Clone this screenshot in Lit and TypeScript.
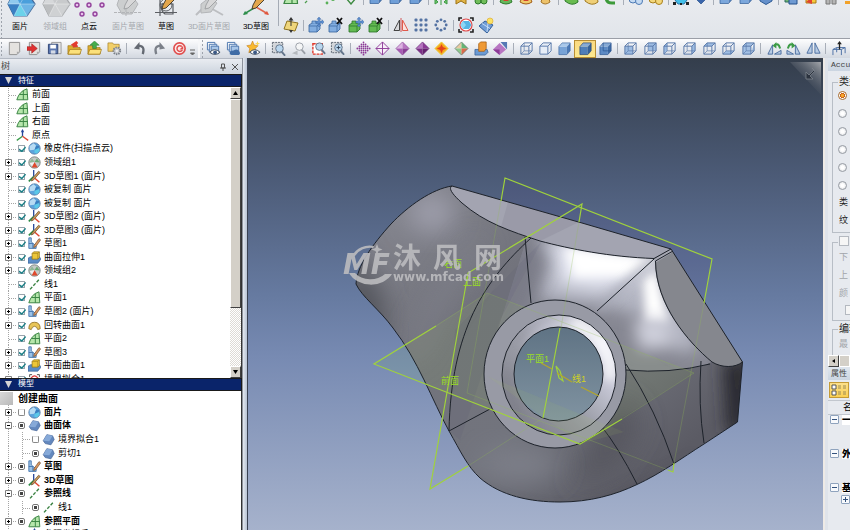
import { LitElement, html, css, svg, nothing, TemplateResult, SVGTemplateResult } from "lit";
import { customElement } from "lit/decorators.js";
import { classMap } from "lit/directives/class-map.js";

type Art = SVGTemplateResult;

/* ---------- shared icon parts, all on a 16 x 16 grid ---------- */
const icon = (art: Art, cls = "ic"): TemplateResult =>
  html`<svg class=${cls} viewBox="0 0 16 16" aria-hidden="true">${art}</svg>`;

const wireCube = (face = "none", edge = "#5878a9", inner = true): Art => svg`
  <path d="M2 5.5h8.5v8.5H2zM2 5.5L5.5 2H14l-3.500 3.500M14 2v8.500l-3.500 3.500" fill=${face} stroke=${edge} stroke-linejoin="round"/>
  ${inner ? svg`<path d="M5.500 2v8.500H14M5.500 10.500L2 14" fill="none" stroke=${edge} stroke-width=".7"/>` : nothing}`;
const solidCube = (front: string, top: string, side: string, edge: string): Art => svg`
  <path d="M2 6h8.500v8.500H2z" fill=${front}/><path d="M2 6l3.500-4H14l-3.500 4z" fill=${top}/>
  <path d="M10.500 6L14 2v8.500l-3.500 4z" fill=${side}/>
  <path d="M2 6l3.500-4H14v8.500l-3.500 4H2z" fill="none" stroke=${edge} stroke-width=".7"/>`;
const partCube = (c: string, d: string): Art => svg`
  <path d="M1 8l3-2h8v6l-3 3H1z" fill=${c} stroke=${d} stroke-width=".8"/><path d="M9 15V9l3-3M1 9h8" fill="none" stroke=${d} stroke-width=".7"/>
  <path d="M4 6V4h4v3" fill=${c} stroke=${d} stroke-width=".7"/>`;
const diamond = (a: string, b: string, c: string, d: string, edge: string): Art => svg`
  <path d="M8 1v7H1z" fill=${a}/><path d="M8 1l7 7H8z" fill=${b}/><path d="M1 8h7v7z" fill=${c}/><path d="M15 8H8v7z" fill=${d}/>
  <path d="M8 1l7 7-7 7-7-7z" fill="none" stroke=${edge} stroke-width=".7"/>`;
const lens = (x = 9, y = 7, c = "#64768c", glass = "#b9d6ee"): Art => svg`
  <path d="M${x + 2} ${y + 3}l3.500 4" stroke=${c} stroke-width="2" stroke-linecap="round"/>
  <circle cx=${x} cy=${y} r="4" fill=${glass} stroke=${c}/>`;
const dashBox = svg`<path d="M1.500 1.500h11v11h-11z" fill="#d3d6da" stroke="#5b6470" stroke-dasharray="2 1"/>`;
const page = svg`<path d="M2.500 1.500h11v10l-3 3h-8z" fill="#e4e2df" stroke="#8f8f8f"/><path d="M13.500 11.500h-3v3z" fill="#aaa"/>`;
const folder = svg`<path d="M1 5h5l1 2h7v7H1z" fill="#dcae32" stroke="#9b7414" stroke-width=".7"/><path d="M1 14l2-5h12.500l-1.800 5z" fill="#fbe07a" stroke="#9b7414" stroke-width=".7"/>`;
const layers = svg`
  <path d="M1.500 1.500h8v8h-8z" fill="#fff" stroke="#4a74ad"/><path d="M3.500 3.500h8v8h-8z" fill="#dbe8f6" stroke="#4a74ad"/>
  <path d="M5.500 5.500h8v8h-8z" fill="#a8c6e8" stroke="#4a74ad"/>`;
const eye = svg`<path d="M4 12q5-5.500 11 0-5.500 4.500-11 0z" fill="#fff" stroke="#3c4756"/><circle cx="9.700" cy="12" r="2" fill="#3c5a86"/>`;
const arrows4 = svg`<path d="M11 0l2 2.300h-1.300V4H14V2.700L16 5l-2 2.300V6h-2.300v2H13l-2 2-2-2h1.300V6H8V4h2.300V2.300H9z" fill="#5d8ed0" stroke="#33619c" stroke-width=".4"/>`;
const cross = svg`<path d="M9 1l5 6M14 1L9 7" stroke="#111" stroke-width="1.800"/>`;
const tri = svg`<path d="M6.500 2v11H1zM9.500 2v11H15z" fill="#b7cbe4" stroke="#3e6298" stroke-width=".9"/>`;

/* ---------- tree icons ---------- */
const treeArt: Record<string, Art> = {
  plane: svg`<path d="M1 14.500Q4 4 13.500 1l1 13.500z" fill="#b5e6ab" stroke="#3b8544" stroke-width="1.200"/><path d="M4.500 8h10M9 3v11.500" stroke="#3b8544" stroke-width="1.200"/>`,
  origin: svg`<path d="M8 9V1" stroke="#26479b" stroke-width="1.600"/><path d="M6 4l2-4 2 4z" fill="#26479b"/><path d="M8 9l-7 5" stroke="#3c9c4c" stroke-width="1.600"/><path d="M8 9l7 5" stroke="#da4a34" stroke-width="1.600"/>`,
  mesh: svg`<circle cx="8" cy="8" r="7" fill="#5ba3dc" stroke="#5b7aa3"/><path d="M2 5l5-3.500 3 3-2 5-6 .5z" fill="#b7dbf3"/><path d="M8 9.500l5-2 1.500 3-3.500 3.500-3-.5z" fill="#5bc8e8"/><path d="M10 4.500l4 .5-1 2.500-5 2z" fill="#3a7fc0"/>`,
  region: svg`<circle cx="8" cy="8" r="7" fill="#c5c9c7" stroke="#6d7673"/><path d="M1.500 8L5 3l3 4.500z" fill="#8fb795"/><path d="M8 7.500L11 3l3.500 5z" fill="#68a870"/><path d="M8 7.500l4 6.500H4.500z" fill="#e0492c"/><path d="M2 9l6-1.500-3 5z" fill="#eef0ee"/>`,
  sketch3d: svg`<path d="M7 8V0" stroke="#26479b" stroke-width="1.600"/><path d="M7 8l-6 6" stroke="#2b8a45" stroke-width="2"/><path d="M7 9l7 6" stroke="#e0452f" stroke-width="1.800"/><path d="M13 1.500l2 1.500-8.500 9.500-2.500 1 .8-2.500z" fill="#c99a5b" stroke="#5c4224" stroke-width=".8"/>`,
  sketch: svg`<path d="M1 1h3v5l6 5v3H1z" fill="#9cc2e6" stroke="#3a6ca8"/><path d="M1 8h5v6" fill="none" stroke="#3a6ca8"/><path d="M13.500 2l2 1.500-6 8.500-2.500 1 .5-2.600z" fill="#dc9a63" stroke="#6b4220" stroke-width=".8"/>`,
  extrude: svg`<path d="M0 9l3-2h11l2 3-4 5H0z" fill="#5a8cc7" stroke="#365f93" stroke-width=".8"/><path d="M5 3l2-2h7v7l-2 2H5z" fill="#ecc73a" stroke="#8b6b10" stroke-width=".8"/><path d="M5 3h7v7M12 3l2-2" fill="none" stroke="#8b6b10" stroke-width=".6"/>`,
  line: svg`<path d="M2.500 14L13.500 2" stroke="#37803f" stroke-width="1.700" stroke-dasharray="4 2"/>`,
  revolve: svg`<path d="M1 12Q1 4 8 4t7 8l-3 1q-1-4-4-4t-4 4z" fill="#e8c558" stroke="#8e6d1c"/>`,
  body: svg`<path d="M1.500 9.500L6 2l7 1.500L15 8l-4 6.500-7-1.500z" fill="#6388be" stroke="#4b6a9b" stroke-width=".9"/><path d="M1.500 9.500L6 2l7 1.500L9 10z" fill="#86a9d8"/>`,
  fit: svg`<path d="M2 5V2h3M11 2h3v3M2 11v3h3M11 14h3v-3" fill="none" stroke="#333"/><path d="M4 6q4-5 8 0l-1 6H5z" fill="#fff" stroke="#dd3c3c" stroke-width="1.400"/>`,
};

/* ---------- toolbar groups ---------- */
const rowOne: Art[][] = [
  [treeArt.plane, svg`<path d="M2 14L12 4" stroke="#4c9c4e" stroke-width="1.300" stroke-dasharray="3 2"/>`, svg`<circle cx="10" cy="10" r="2" fill="#58b058"/><circle cx="4" cy="14" r="1.400" fill="#58b058"/>`, svg`<path d="M3 9l5 6 5-6-5-5z" fill="none" stroke="#3d8a41" stroke-width="1.400"/>`],
  [0, 1, 2].map(() => solidCube("#6f9fd8", "#a9cbef", "#4a78b4", "#2f5b95")),
  [svg`<path d="M8 4v12M2 10l3 3-3 2zM14 10l-3 3 3 2z" stroke="#3f9a45" fill="#6cc46c"/>`, svg`<path d="M3 8l5 3 5-3v7l-5-3-5 3z" fill="#e2b548" stroke="#9d7214"/>`, svg`<circle cx="5" cy="12" r="3" fill="#71bd5a" stroke="#2d7a2b"/><circle cx="11" cy="12" r="3" fill="#71bd5a" stroke="#2d7a2b"/>`],
  [svg`<path d="M6 4h4l4 9q-6 4-12 0z" fill="#67b85c" stroke="#2d7a2b"/><path d="M5 12q3-3 6 0z" fill="#d4402c"/>`, svg`<path d="M6 4h4l4 9q-6 4-12 0z" fill="#f0cb6a" stroke="#a35c17"/><path d="M5 12q3-3 6 0z" fill="#d4402c"/>`, svg`<path d="M6 4h3l3 9q-5 4-9 0z" fill="#edc26b" stroke="#a3752a"/>`],
  [svg`<path d="M2 12q0-6 7-5 6 1 6 6-6 5-13-1z" fill="#69bb4f" stroke="#2d7a2b"/>`, svg`<path d="M2 12q0-6 7-5 6 1 6 6-6 5-13-1z" fill="#efcf77" stroke="#a07a22"/>`, svg`<path d="M3 8q0 6 6 6h3" fill="none" stroke="#3d9a3a" stroke-width="3"/>`],
  [svg`<circle cx="5" cy="10" r="4" fill="#c5daf2" stroke="#4c7ab5"/><circle cx="11" cy="12" r="3.500" fill="#c5daf2" stroke="#4c7ab5"/>`, svg`<circle cx="5" cy="10" r="4" fill="#f3d77c" stroke="#a9801d"/><circle cx="11" cy="12" r="3.500" fill="#f3d77c" stroke="#a9801d"/>`],
  [svg`<path d="M4 5h8l2 6-3 4H5l-3-4z" fill="#43bfe8" stroke="#2a74a8"/><path d="M0 13h3v3H0zM13 13h3v3h-3zM7 14h2v2H7z" fill="#222"/>`, diamond("#6d9ad5", "#6d9ad5", "#3a65ab", "#3a65ab", "#24508c")],
  [solidCube("#7ba7dc", "#b9d5f3", "#5684c0", "#2f5b95"), solidCube("#7ba7dc", "#7cc467", "#5684c0", "#2f5b95"), svg`<path d="M2 5l6-3 6 3v7l-6 3.500L2 12z" fill="#6590cb" stroke="#2f5b95"/>`],
  [svg`<path d="M2 5h7v8H2z" fill="#73b572" stroke="#2d6b5e"/><path d="M6 8h8v7H6z" fill="#6f9ad2" stroke="#24508c"/>`, svg`<path d="M3 6h10v8H3z" fill="#f7c93d" stroke="#a97b15"/><path d="M3 13l6-5v7z" fill="#e0452f"/>`, svg`<path d="M3 4h4v11H3zM9 4h4v11H9z" fill="#b5b5b5" stroke="#777"/>`, svg`<path d="M2 12h8v3H2z" fill="#f2a22a"/><path d="M9 8h6v7H9z" fill="#f9cf3e" stroke="#b5791a"/>`],
];
const rowTwo: Art[][] = [
  [svg`<path d="M1 12l3-8 11 2-3 8z" fill="#efd67c" stroke="#8f731f"/><path d="M8 0l2.500 3.500h-5zM7.500 3h1v6h-1zM8 16l2-3H6z" fill="#333"/>`],
  [svg`${partCube("#82ade0", "#35629c")}${arrows4}`, svg`${partCube("#82ade0", "#35629c")}${cross}`, svg`${partCube("#63bb52", "#266f25")}${arrows4}`, svg`${partCube("#63bb52", "#266f25")}${cross}`],
  [svg`<path d="M6.500 3v10.500H1z" fill="#d8d9dc" stroke="#444"/><path d="M9.500 3v10.500H15z" fill="#fbe3df" stroke="#e05a4c"/><path d="M8 1v14" stroke="#c33" stroke-width=".8"/>`,
   svg`${[3, 8, 13].map(y => [3, 8, 13].map(x => svg`<rect x=${x - 1.5} y=${y - 1.5} width="3" height="3" rx="1" fill="#5473a3"/>`))}`,
   svg`${[0, 1, 2, 3, 4, 5, 6, 7].map(i => svg`<circle cx=${8 + 5.2 * Math.cos(i * Math.PI / 4)} cy=${8 + 5.2 * Math.sin(i * Math.PI / 4)} r="1.400" fill="#5473a3"/>`)}`],
  [svg`<path d="M1 4V1h3M12 1h3v3M1 12v3h3M12 15h3v-3" fill="none" stroke="#222" stroke-width="1.600"/><circle cx="8" cy="8" r="6" fill="#fff" stroke="#e04848" stroke-width="1.200"/><path d="M5 4h6l2.500 4-2.500 4H5L2.500 8z" fill="#56b4e4"/><path d="M5 4l3 4-3 4-2.500-4z" fill="#8bd6f5"/>`,
   svg`<path d="M1 9l6-5 8 4-6 8z" fill="#6f9cd6" stroke="#315d98"/><path d="M4 6.500l8 5M9 15l1-9" stroke="#c5dbf4"/><circle cx="12" cy="4" r="3" fill="#fbe264" stroke="#d9a52b" stroke-width=".6"/>`],
];
const fileTools: Art[][] = [
  [page, svg`${page}<path d="M0 6h5V3l6 5-6 5v-3H0z" fill="#df3030" stroke="#8f1717" stroke-width=".5"/>`,
   svg`<path d="M5 1.500h10v12H5z" fill="#e7e7e7" stroke="#999"/><path d="M1.500 3.500h10v10h-10z" fill="#5b77b0" stroke="#2e4373"/><path d="M3.500 4h6v4h-6z" fill="#fff"/><path d="M4 10h5v3.500H4z" fill="#d4dae6"/>`,
   svg`${folder}<path d="M4 4l6-4 2 2-1.500 1.500L12 6l-6 1 .5-1.500z" fill="#e23b2d"/>`,
   svg`${folder}<path d="M8 0l5 4.500h-3V8H6V4.500H3z" fill="#45ad4c" stroke="#22702a" stroke-width=".5"/>`,
   svg`<path d="M1 2h5l1 1.500h6V11H1z" fill="#f2cf68" stroke="#a07a22" stroke-width=".7"/><circle cx="10.500" cy="10.500" r="3.600" fill="#c9ccd1" stroke="#7b8089" stroke-width="2" stroke-dasharray="1.500 1"/><circle cx="10.500" cy="10.500" r="1.300" fill="#eee"/>`],
  [svg`<path d="M11.500 14q3-9-5-9" fill="none" stroke="#656a73" stroke-width="2.400"/><path d="M8 1v8L2 8z" fill="#656a73"/>`,
   svg`<path d="M4.500 14q-3-9 5-9" fill="none" stroke="#7b8089" stroke-width="2.400"/><path d="M8 1v8l6-1z" fill="#7b8089"/>`,
   svg`<circle cx="8" cy="8" r="6" fill="#fbeceb" stroke="#e04f4f" stroke-width="1.800"/><path d="M10.500 6A3 3 0 1 0 11 9.500" fill="none" stroke="#e04f4f" stroke-width="1.600"/><path d="M12 5v4H8z" fill="#e04f4f"/>`],
];
const front = svg`<path d="M2 5.500h8.500V14H2z" fill="#9dbce2"/>`;
const viewTools: Art[][] = [
  [svg`${layers}${eye}`, svg`${layers}<path d="M4 14q-.5-4 4-4 5-3 7 3l-1 2H6z" fill="#3f6ca6"/>`, svg`<path d="M7 0l1.700 4.300L13 5 9.800 8l1 4.500L7 10l-4 2.500L4 8 .8 5l4.400-.7z" fill="#f9b92f" stroke="#c57b16" stroke-width=".6"/><path d="M12 0l1 2 2 .5-2 1-.5 2-1-2-2-.5 2-1z" fill="#f9d75a"/>${eye}`],
  [svg`${dashBox}${lens(9, 8)}`, svg`<path d="M1 13l6-3v5z" fill="#b4b8bd"/>${lens(9, 6, "#9a9fa7", "#f4f5f6")}`, svg`<path d="M2 3h10v11H2z" fill="#fff" stroke="#e03a2d" stroke-width="1.500" stroke-dasharray="3 1"/>${lens(9, 6)}`, svg`${dashBox}${lens(9, 7)}<path d="M9 5v4M7 7h4" stroke="#2a3b50"/>`],
  [svg`${[-3, -2, -1, 0, 1, 2, 3].map(r => [-3, -2, -1, 0, 1, 2, 3].filter(c => Math.abs(r) + Math.abs(c) < 4).map(c => svg`<circle cx=${8 + c * 2.2} cy=${8 + r * 2.2} r=".95" fill="#8d3c97"/>`))}`,
   svg`<path d="M8 1l7 7-7 7-7-7zM8 1v14M1 8h14" fill="#f6eef8" stroke="#8d3c97"/>`,
   diamond("#dcb3e2", "#b876c2", "#a85bb4", "#8a3f96", "#8a3f96"), diamond("#b673c1", "#8b3997", "#7b2e86", "#64226f", "#64226f"),
   svg`<path d="M8 1l7 7-7 7-7-7z" fill="#f7a51b" stroke="#e9d13a"/><path d="M8 3.500l1.500 3L13 8l-3.500 1.500L8 13l-1.500-3.500L3 8l3.500-1.500z" fill="#e2421d"/>`,
   diamond("#e9c9a1", "#63b573", "#8cc98b", "#dd6b4c", "#5f7365"),
   svg`<path d="M1 9h13l1 3-3 3H1z" fill="#6b9ad3" stroke="#355f98" stroke-width=".8"/><path d="M5 3l2-2h6v7l-2 3H5z" fill="#ef9a35" stroke="#a55d12" stroke-width=".8"/>`,
   svg`<path d="M0 9l7-7 7 7-7 6z" fill="#b876c2"/><path d="M0 9h7v6z" fill="#8b3997"/><path d="M8 1h7v8z" fill="#5679b5"/>`],
  [wireCube(), wireCube("#e6edf7", "#5878a9", false), solidCube("#78a3d6", "#a9c8ea", "#4b79b5", "#39659f"), solidCube("#4f7eb8", "#87abd6", "#34609a", "#1f4276"), svg`${solidCube("#5c8ac4", "#87abd6", "#3f6ca6", "#24508c")}<path d="M5.500 2v8.500H14" fill="none" stroke="#24508c" stroke-width=".7"/>`],
  [svg`${front}${wireCube()}`, svg`<path d="M5.500 2H14v8.500H5.500z" fill="#9dbce2"/>${wireCube()}`, svg`<path d="M2 5.500L5.500 2v8.500L2 14z" fill="#9dbce2"/>${wireCube()}`, svg`<path d="M10.500 5.500L14 2v8.500L10.500 14z" fill="#9dbce2"/>${wireCube()}`, svg`<path d="M2 5.500L5.500 2H14l-3.500 3.500z" fill="#9dbce2"/>${wireCube()}`, svg`<path d="M2 14l3.500-3.500H14L10.500 14z" fill="#9dbce2"/>${wireCube()}`, wireCube("#a3c0e4")],
  [svg`<path d="M6 4v10H1zM8 14l7-4v4z" fill="#b7cbe4" stroke="#3e6298" stroke-width=".9"/><path d="M8 5q4-4 6 3" fill="none" stroke="#3c9b45" stroke-width="2.200"/><path d="M10 1v7L6 5z" fill="#3c9b45"/>`,
   svg`<path d="M10 4v10h5zM8 14l-7-4v4z" fill="#b7cbe4" stroke="#3e6298" stroke-width=".9"/><path d="M8 5q-4-4-6 3" fill="none" stroke="#3c9b45" stroke-width="2.200"/><path d="M6 1v7l4-3z" fill="#3c9b45"/>`, tri],
  [svg`<path d="M1 15V9l4-2h9v6M1 9h9v6M10 9l4-2M5 7v5" fill="none" stroke="#4a6ea3"/><path d="M8 0l2.500 3.500h-5zM7.300 3h1.400v6H7.300z" fill="#222"/>`],
];

/* ---------- large ribbon commands; the art shows the lower part of each glyph ---------- */
const hex = (a: string, b: string, c: string, d: string, e: string) => svg`
  <path d="M14-8h13l8 12-8 12H14L8 4z" fill=${a} stroke=${e} stroke-width="1.200"/>
  <path d="M14-8L8 4h12z" fill=${b}/><path d="M8 4h12l-6 12z" fill=${c}/><path d="M20 4l7 12H14z" fill=${d}/><path d="M20 4h15l-8 12z" fill=${b} opacity=".5"/>
  <path d="M8 4h27M20 4l-6 12M20 4l7 12M20 4l7-12" stroke="#fff" stroke-opacity=".5" stroke-width=".7" fill="none"/>`;
const pencil = svg`<path d="M23-6l6 5-9 9-4 1 1-4z" fill="#e3a64c" stroke="#3b3326" stroke-width=".9"/>`;
const grayPencil = svg`<path d="M23-6l6 5-9 9-4 1 1-4z" fill="#d8d8d9" stroke="#9c9ea0" stroke-width=".9"/>`;
const commands: { name: string; cls: string; off?: boolean; art: Art }[] = [
  { name: "面片", cls: "w32", art: hex("#4a9fdc", "#8fc9ee", "#3a80c4", "#6bd2ea", "#41699b") },
  { name: "领域组", cls: "w38", off: true, art: hex("#c8cacc", "#d6d8da", "#bcbec0", "#cfd1d3", "#a6a8ab") },
  { name: "点云", cls: "w30", art: svg`${[[8, 5], [20, 5], [33, 5], [13, 14], [26, 14]].map(([x, y]) => svg`<circle cx=${x} cy=${y} r="2" fill="#e7c3ea" stroke="#93429c" stroke-width="1.400"/>`)}` },
  { name: "面片草图", cls: "w48", off: true, art: svg`<path d="M12-4h12l6 8-6 10H14L9 5z" fill="#cccecf" stroke="#b3b5b8"/><path d="M6 12.500h28M18 16V6" stroke="#b3b5b8" stroke-dasharray="3 1"/>${grayPencil}` },
  { name: "草图", cls: "w28", art: svg`<path d="M14-3v19M9 12.500h22M14 4h13v10H19Q13 9 17 3" fill="none" stroke="#5c5f64" stroke-width="1.200"/><circle cx="20" cy="5" r="6" fill="none" stroke="#5c5f64"/>${pencil}` },
  { name: "3D面片草图", cls: "w58", off: true, art: svg`<path d="M18 4L7 15M18 6l16 9" stroke="#bcbec1" stroke-width="2"/><path d="M12 4l8-6 8 5-6 9-10 1z" fill="#cccecf" stroke="#b3b5b8"/>${grayPencil}` },
  { name: "3D草图", cls: "w36", art: svg`<path d="M20 7V-4" stroke="#2b55ac" stroke-width="1.500"/><path d="M20 7L8 14" stroke="#2f8f4c" stroke-width="1.500"/><path d="M7 15l2-4 3 3z" fill="#2f8f4c"/><path d="M20 7l12 7" stroke="#e0664e" stroke-width="1.500"/><path d="M33 15l-5-1 3-3z" fill="#e0563e"/>${pencil}` },
];

/* ---------- tree data ---------- */
interface Item { label: string; art?: string; box?: "plus" | "minus"; mark?: "check" | "eye" | "none"; child?: boolean; bold?: boolean; }
const features: Item[] = [
  { label: "前面", art: "plane" }, { label: "上面", art: "plane" }, { label: "右面", art: "plane" }, { label: "原点", art: "origin" },
  { label: "橡皮件(扫描点云)", art: "mesh", mark: "check" },
  { label: "领域组1", art: "region", mark: "check", box: "plus" },
  { label: "3D草图1 (面片)", art: "sketch3d", mark: "check", box: "plus" },
  { label: "被复制 面片", art: "mesh", mark: "check" }, { label: "被复制 面片", art: "mesh", mark: "check" },
  { label: "3D草图2 (面片)", art: "sketch3d", mark: "check", box: "plus" },
  { label: "3D草图3 (面片)", art: "sketch3d", mark: "check", box: "plus" },
  { label: "草图1", art: "sketch", mark: "check", box: "plus" },
  { label: "曲面拉伸1", art: "extrude", mark: "check", box: "plus" },
  { label: "领域组2", art: "region", mark: "check", box: "plus" },
  { label: "线1", art: "line", mark: "check" }, { label: "平面1", art: "plane", mark: "check" },
  { label: "草图2 (面片)", art: "sketch", mark: "check", box: "plus" },
  { label: "回转曲面1", art: "revolve", mark: "check", box: "plus" },
  { label: "平面2", art: "plane", mark: "check" },
  { label: "草图3", art: "sketch", mark: "check", box: "plus" },
  { label: "平面曲面1", art: "extrude", mark: "check", box: "plus" },
  { label: "境界拟合1", art: "fit", mark: "check", box: "plus" },
];
const model: Item[] = [
  { label: "面片", art: "mesh", mark: "none", box: "plus", bold: true },
  { label: "曲面体", art: "body", mark: "eye", box: "minus", bold: true },
  { label: "境界拟合1", art: "body", mark: "none", child: true },
  { label: "剪切1", art: "body", mark: "eye", child: true },
  { label: "草图", art: "sketch", mark: "eye", box: "plus", bold: true },
  { label: "3D草图", art: "sketch3d", mark: "eye", box: "plus", bold: true },
  { label: "参照线", art: "line", mark: "eye", box: "minus", bold: true },
  { label: "线1", art: "line", mark: "eye", child: true },
  { label: "参照平面", art: "plane", mark: "eye", box: "plus", bold: true },
  { label: "参照坐标系", art: "origin", mark: "eye", box: "plus" },
];

/* ---------- the solid part with its reference planes ---------- */
const OUTLINE = "M452 186C432 189 408 206 391 224 372 245 357 266 356 284 362 297 379 309 393 328 418 360 432 400 449 431 461 452 467 466 480 478 501 496 530 502 560 502 590 502 615 495 637 484.500 660 474 682 458 704 444L737.500 422 742.500 362 671 249 582 223Z";
const SADDLE = "M527 237L541 241C570 249 610 257 654 258.500L655 261C656 305 688 342 712 362L703 366Q670 374 626 370L555 374 484 374Z";

const scene = svg`
  <defs>
    <linearGradient id="sky" x1="0" y1="59" x2="0" y2="530" gradientUnits="userSpaceOnUse">
      <stop offset="0" stop-color="#343e4c"/><stop offset=".25" stop-color="#4c5b77"/><stop offset=".5" stop-color="#667aa0"/>
      <stop offset=".63" stop-color="#778ab2"/><stop offset="1" stop-color="#a6b2cc"/>
    </linearGradient>
    <linearGradient id="skin" x1="380" y1="200" x2="620" y2="500" gradientUnits="userSpaceOnUse">
      <stop offset="0" stop-color="#85868f"/><stop offset=".35" stop-color="#72737c"/><stop offset=".7" stop-color="#72747d"/><stop offset="1" stop-color="#5b5b64"/>
    </linearGradient>
    <linearGradient id="torus" x1="514" y1="420" x2="605" y2="335" gradientUnits="userSpaceOnUse">
      <stop offset="0" stop-color="#7f808b"/><stop offset=".4" stop-color="#989aa4"/><stop offset=".75" stop-color="#c6c7d5"/><stop offset="1" stop-color="#f0f1fb"/>
    </linearGradient>
    <linearGradient id="hole" x1="0" y1="327" x2="0" y2="420" gradientUnits="userSpaceOnUse">
      <stop offset="0" stop-color="#5f7384"/><stop offset="1" stop-color="#8093a1"/>
    </linearGradient>
    <linearGradient id="corner" x1="820" y1="62" x2="803" y2="82" gradientUnits="userSpaceOnUse">
      <stop offset="0" stop-color="#a0a3a8"/><stop offset="1" stop-color="#454e5c" stop-opacity=".3"/>
    </linearGradient>
    <filter id="b5" x="-50%" y="-50%" width="200%" height="200%"><feGaussianBlur stdDeviation="5"/></filter>
    <filter id="b8" x="-50%" y="-50%" width="200%" height="200%"><feGaussianBlur stdDeviation="8"/></filter>
    <filter id="b14" x="-60%" y="-60%" width="220%" height="220%"><feGaussianBlur stdDeviation="14"/></filter>
    <clipPath id="part"><path d=${OUTLINE}/></clipPath>
    <clipPath id="saddle"><path d=${SADDLE}/></clipPath>
    <clipPath id="rim"><ellipse cx="559" cy="375" rx="57" ry="60"/></clipPath>
  </defs>
  <rect x="-1000" y="59" width="3000" height="471" fill="url(#sky)"/>
  <path d="M790 62h31v33z" fill="url(#corner)"/>
  <path d="M812 68l2 2-5 5-3-3v7h7l-3-3 5-5-2-2z" fill="#2b333f" stroke="#7c838c" stroke-width=".8"/>

  <path d="M505 178l207 81-39 213-206-79z" fill="#4a4684" opacity=".16"/>
  <path d="M582 204L468 273l-38 216 113-66z" fill="#5a6a9a" opacity=".1"/>
  <path d="M374 364l113-71 207 80-114 71z" fill="#79b060" opacity=".14"/>

  <g clip-path="url(#part)">
    <path d=${OUTLINE} fill="url(#skin)"/>
    <ellipse cx="432" cy="213" rx="22" ry="18" fill="#a4a4b2" filter="url(#b14)"/>
    <path d="M345 240v90l35 30 5-60z" fill="#505158" filter="url(#b14)"/>
    <path d="M480 240L440 300l-30 60" stroke="#868792" stroke-width="16" fill="none" filter="url(#b14)" opacity=".6"/>
    <g clip-path="url(#saddle)">
      <path d=${SADDLE} fill="#868792"/>
      <path d="M538 236L665 256 700 350 680 352 640 315 600 305 540 300z" fill="#b4b6c3" filter="url(#b8)"/>
      <path d="M552 240L660 256 640 280 600 290 560 284z" fill="#e3e5f0" filter="url(#b8)"/>
      <path d="M565 248L660 260 625 276 575 277z" fill="#fff" filter="url(#b5)"/>
      <path d="M643 280L656 270 668 322 646 324z" fill="#fff" filter="url(#b5)"/>
      <path d="M634 320L665 318 676 345 640 350z" fill="#cfd0dc" filter="url(#b8)"/>
      <path d="M654 258L597 311" stroke="#a5a7b4" stroke-width="9" filter="url(#b5)" opacity=".6"/>
      <path d="M528 235L460 330v60h25L550 262z" fill="#787985" filter="url(#b8)" opacity=".8"/>
    </g>
    <path d="M622 395l20 30-30 45-40 15 20-40z" fill="#55545d" filter="url(#b14)"/>
    <ellipse cx="520" cy="465" rx="40" ry="16" fill="#7f818b" filter="url(#b14)"/>
    <path d="M400 440Q480 520 580 512L700 460v60H430z" fill="#4d4c55" filter="url(#b8)" opacity=".6"/>
    <path d="M722 362l30-5-5 80-20-5z" fill="#2c2c31" filter="url(#b8)"/>
    <path d="M374 364l113-71 207 80-114 71z" fill="#9fc45a" opacity=".1"/>
    <path d="M542 241L500 320 460 440 449 431 455 330z" fill="#3a3a66" opacity=".08"/>
  </g>
  <path d="M452 186C448 188 452 194 462 203 485 223 510 231 540 241 570 249 610 257 654 258.500L671 249 582 223Z" fill="#a3a4b1"/>
  <path d="M579 222L508 202 501 227 540 241z" fill="#8c8c9a" opacity=".4"/>
  <path d="M671 249L742.500 362C735 368 722 368 712 362 688 342 655 305 655 261z" fill="#85878e"/>
  <path d="M654 259l17-10 2 3-18 11z" fill="#a6a7b2"/>

  <g fill="none" stroke="#1d222a" stroke-width="1">
    <path d=${OUTLINE}/>
    <path d="M452 186C448 188 452 194 462 203 485 223 510 231 540 241 570 249 610 257 654 258.500L671 249"/>
    <path d="M673 251L655.500 261C656 305 688 342 712 362 722 368 735 368 742.500 362"/>
    <path d="M525 237l6 66M531 238C485 280 451 330 449 431L490 409"/>
    <path d="M654 259L597 311M626 370Q670 374 710 364M626 364Q656 410 674 464M602 427Q618 447 637 484M701 361Q698 405 704 443"/>
  </g>
  <ellipse cx="555" cy="374" rx="71" ry="74" fill="#989aa5" stroke="#1d222a"/>
  <ellipse cx="559" cy="375" rx="57" ry="60" fill="url(#torus)"/>
  <g clip-path="url(#rim)">
    <path d="M516 340A54 57 0 0 1 600 336M520 412A54 57 0 0 1 508 370" fill="none" stroke="#74757f" stroke-width="5" filter="url(#b5)" opacity=".5"/>
    <path d="M572 322A50 52 0 0 1 609 380" fill="none" stroke="#fff" stroke-width="7" filter="url(#b5)"/>
  </g>
  <ellipse cx="559" cy="375" rx="57" ry="60" fill="none" stroke="#1d222a"/>
  <ellipse cx="558.500" cy="374" rx="44.500" ry="47" fill="url(#hole)" stroke="#1d222a"/>
  <path d="M487 376L624 432 580 444z" fill="#a2c860" opacity=".1"/>

  <g fill="none" stroke="#95bd52" stroke-width="1" opacity=".28">
    <path d="M501 200L467 393l201 77M704 303l-30 160M579 222l-18 106M543 418l-75 48M436 326l51-33 207 80-72 46"/>
  </g>
  <g fill="none" stroke="#a0d23c" stroke-width="1.200">
    <path d="M501 201l4-23 207 81-8 44M674 463l-1 9-5-2"/>
    <path d="M579 222l3-18-114 69-38 216 38-23M560 328l-17 90"/>
    <path d="M436 326l-62 38 206 80 42-25"/>
    <path d="M556 366l4 5 3 10-4-3z"/>
  </g>
  <path d="M541 363l11 6M557 373l15 9M581 387l18 9" stroke="#b3a72a" stroke-width="1.200"/>
  <g class="tag" fill="#9ade1f">
    <text x="444" y="267">右面</text><text x="463" y="285">上面</text><text x="441" y="384">前面</text><text x="526" y="362">平面1</text>
    <text x="572" y="382" fill="#d0d21e">线1</text>
  </g>

  <g fill="#bcbcbf" opacity=".9">
    <path d="M352 256A20 20 0 0 1 374 246L373 248A18 18 0 0 0 355 256zM349 273A24 20 0 0 0 392 274L385 274A19 15 0 0 1 355 273z"/>
    <path d="M377 244l1.500 4 4 1.500-4 1.500-1.500 4-1.500-4-4-1.500 4-1.500z"/>
    <text class="mf" x="343" y="274">MF</text>
    <text class="brand" x="393" y="268">沐</text><text class="brand" x="433" y="268">风</text><text class="brand" x="474" y="268">网</text>
    <text class="site" x="393" y="281">www.mfcad.com</text>
  </g>`;

@customElement("app-root")
export class AppRoot extends LitElement {
  static styles = css`
    :host { display: flex; flex-direction: column; height: 100vh; overflow: hidden; background: #e4e8ee; color: #000;
      font: 9px/13px "Liberation Sans", "Noto Sans CJK SC", sans-serif; }
    * { box-sizing: border-box; }
    button, input { margin: 0; padding: 0; font: inherit; color: inherit; }
    button { border: 0; background: none; }
    svg { display: block; }
    .ic { width: 16px; height: 16px; }

    .ribbon { display: flex; flex: none; height: 38px; overflow: hidden; background: linear-gradient(#e9ebef, #e1e5ea); }
    .grip { flex: none; width: 4px; background: radial-gradient(circle, #9da3ac 1px, transparent 1px) 0 0 / 3px 4px repeat-y; }
    .cmd { display: flex; flex-direction: column; align-items: center; gap: 4px; flex: none; font-size: 8px; line-height: 12px; white-space: nowrap; }
    .cmd svg { width: 40px; height: 17px; flex: none; }
    .cmd.off { color: #a4a8ad; }
    .w28 { width: 28px; } .w30 { width: 30px; } .w32 { width: 32px; } .w36 { width: 36px; }
    .w38 { width: 38px; } .w48 { width: 48px; } .w58 { width: 58px; }
    .divide { flex: none; width: 1px; height: 26px; margin: 0 2px 0 4px; background: #a5abb5; }
    .small { display: flex; flex-direction: column; gap: 12px; flex: 1; min-width: 0; }
    .line { display: flex; align-items: center; height: 16px; }
    .line.cut { align-items: flex-end; height: 5px; overflow: hidden; }
    .set { display: flex; flex: none; }
    .tool { display: flex; justify-content: center; align-items: center; width: 20px; flex: none; }
    .bar { flex: none; width: 5px; height: 11px; background: linear-gradient(#a8aeb8, #a8aeb8) 2px 0 / 1px 100% no-repeat; }

    .tools { display: flex; flex: none; align-items: center; height: 20px; border-top: 1px solid #9b9fa7; background: linear-gradient(#fdfdfe, #e8ebf0 50%, #d3d8e0); }
    .tools .grip { height: 16px; }
    .tools .ic { width: 15px; height: 15px; }
    .more { width: 9px; height: 19px; padding-top: 7px; }
    .more svg { width: 7px; height: 8px; }
    .split { flex: none; width: 6px; height: 19px; border-left: 2px solid #f6f7f9; background: radial-gradient(circle, #9da3ac 1px, transparent 1px) 1px 0 / 3px 4px repeat-y; }
    .wide { display: flex; align-items: center; flex: 1; min-width: 0; padding-right: 1px; }
    .wide .set { flex: var(--n) 1 0; }
    .wide .tool { flex: 1 1 0; width: auto; height: 18px; }
    .wide .bar { width: 6px; }
    .tool.on { border: 1px solid #b98f35; background: linear-gradient(#fbd980, #fde98f); }

    .work { display: flex; flex: 1; min-height: 0; }
    .side { display: flex; flex-direction: column; flex: none; width: 243px; border-right: 1px solid #8d929b; background: #fff; }
    .title { display: flex; align-items: center; flex: none; height: 16px; padding: 0 3px 0 1px; gap: 4px; color: #444; border-top: 1px solid #b3b9c3; background: linear-gradient(#e9ecf1, #ccd4de); }
    .title span { flex: 1; }
    .title svg { width: 8px; height: 8px; }
    .head { display: flex; align-items: center; gap: 6px; flex: none; width: 100%; height: 13px; padding-left: 5px; border: 1px solid #1a1a1a; border-width: 1px 1px 1px 0; background: #0a246a; color: #fff; font-size: 8px; line-height: 10px; text-align: left; }
    .head svg { width: 7px; height: 7px; }
    .pane { display: flex; flex: 290 1 0; min-height: 0; overflow: hidden; border-right: 1px solid #333; }
    .pane.low { flex: 139 1 0; }
    ul { display: grid; grid-auto-rows: 1fr; flex: 1; min-width: 0; height: 298px; margin: 1px 0 0; padding: 0; list-style: none; }
    .low ul { height: 150px; }
    li { display: flex; align-items: center; min-height: 0; background: repeating-linear-gradient(#a5a5a5 0 1px, transparent 1px 2px) 8px 0 / 1px 100% no-repeat; white-space: nowrap; }
    li.root { background: none; font-weight: 700; gap: 5px; font-size: 10px; }
    li.root i { width: 13px; height: 13px; background: linear-gradient(135deg, #d9d9d9, #b9b9b9); }
    li.bold { font-weight: 700; }
    .twig { flex: none; width: 16px; height: 14px; padding-left: 5px; background: repeating-linear-gradient(90deg, #a5a5a5 0 1px, transparent 1px 2px) 9px 7px / 7px 1px no-repeat; }
    .twig.deep { width: 30px; background: repeating-linear-gradient(90deg, #a5a5a5 0 1px, transparent 1px 2px) 23px 7px / 7px 1px no-repeat, repeating-linear-gradient(#a5a5a5 0 1px, transparent 1px 2px) 22px 0 / 1px 100% no-repeat; }
    .twig svg { width: 7px; height: 7px; }
    label { display: flex; align-items: center; height: 13px; }
    .tick { appearance: none; display: grid; place-items: center; width: 7px; height: 7px; margin: 0 3px 0 2px; border: 1px solid #9aa5ad; background: #fff; }
    .tick.check::before { content: ""; width: 7px; height: 6px; background: #1c7f86; clip-path: polygon(0 35%, 40% 65%, 90% 0, 100% 20%, 42% 100%, 0 65%); }
    .tick.eye { border-radius: 2px; border-color: #777; }
    .tick.eye::before { content: ""; width: 3px; height: 3px; background: #444; }
    .tick.none { border-radius: 0 0 2px 2px; border-color: #888; border-top-color: #ddd; }
    .leaf { width: 13px; height: 13px; margin-right: 3px; }
    .scroll { display: flex; flex-direction: column; flex: none; width: 11px; background: repeating-conic-gradient(#fff 0 25%, #dedbd5 0 50%) 0 0 / 2px 2px; }
    .arrow { display: grid; place-items: center; flex: none; width: 11px; height: 12px; border: 1px solid #fff; border-right-color: #404040; border-bottom-color: #404040; background: #d4d0c8; }
    .arrow svg { width: 5px; height: 4px; }
    .thumb { flex: 207 1 0; border: 1px solid #fff; border-right-color: #404040; border-bottom-color: #404040; background: #d4d0c8; }
    .rest { flex: 58 1 0; }

    .gutter { flex: none; width: 5px; border-right: 1px solid #3a4252; background: linear-gradient(90deg, #e3e8ef, #b8c3d4); }
    .view { flex: 1; min-width: 0; border-top: 1px solid #3f434a; background: #667aa0; }
    .view svg { width: 100%; height: 100%; }
    .tag { font: 9px "Liberation Sans", "Noto Sans CJK SC", sans-serif; }
    .mf { font: italic 700 28px "DejaVu Sans", sans-serif; }
    .brand { font: 700 28px "Noto Sans CJK SC", sans-serif; }
    .site { font: 700 12px "DejaVu Sans", sans-serif; }

    .props { display: flex; flex-direction: column; flex: none; width: 27px; padding-left: 5px; overflow: hidden; background: linear-gradient(90deg, #eeeae6 0 2px, #dfe3ea 2px 5px, #e7eaef 5px); white-space: nowrap; }
    .cap { flex: none; height: 13px; padding-left: 3px; background: linear-gradient(#dfe6ee, #cbd5e1); color: #444; font: 8px/13px "Liberation Mono", "Noto Sans CJK SC", monospace; }
    fieldset { min-width: 60px; margin: 0 0 0 4px; padding: 0 0 0 5px; border: 1px solid #b8bec6; }
    .box1 { height: 157px; margin-top: 5px; }
    .box2 { height: 85px; margin-top: 3px; }
    .box3 { height: 32px; margin-top: 2px; border-bottom: 0; overflow: hidden; }
    legend { height: 12px; padding: 0 1px; line-height: 12px; font-size: 10px; color: #222; }
    .radio { appearance: none; display: block; width: 9px; height: 9px; margin: 0 0 9px; border: 1px solid #979ca3; border-radius: 50%; background: radial-gradient(#fff 30%, #d5d8dc); }
    .radio:checked { border-color: #a8692a; background: radial-gradient(#f7a72c 25%, #c65a12 45%, #fff 55%); }
    .radio:first-of-type { margin-top: 3px; }
    .radio:last-of-type { margin-bottom: 3px; }
    .word { display: block; height: 18px; line-height: 18px; color: #222; padding-left: 1px; }
    .faint .word, .word.faint { color: #a2a5aa; }
    .square { appearance: none; display: block; width: 10px; height: 10px; border: 1px solid #b4b9c0; background: #f6f6f6; }
    .late { margin: 3px 0 0 7px; }
    .hs { display: flex; flex: none; height: 12px; }
    .hs i { flex: 1; border: 1px solid #fff; background: #d4d0c8; }
    .sort { flex: none; width: 20px; height: 16px; margin: 2px 0 0 1px; border: 1px solid #c59b36; background: linear-gradient(#fde08a, #fbd052); }
    .sort svg { width: 16px; height: 12px; margin: auto; }
    .col { flex: none; height: 15px; margin-top: 2px; padding-left: 15px; border: 1px solid #c2c7ce; border-width: 1px 0; line-height: 13px; }
    .prop { display: flex; align-items: flex-start; flex: none; gap: 3px; height: 34px; padding-left: 2px; font-weight: 700; }
    .prop b { flex: 1; background: #fff; height: 10px; line-height: 10px; }
    .fold { flex: none; width: 9px; height: 9px; border: 1px solid #8fa3bd; border-radius: 1px; background: #f7f9fc; }
    .fold svg { width: 7px; height: 7px; }
    .sub { flex: none; margin: -22px 0 0 13px; }
  `;

  private tool(art: Art, name: string, on = false) {
    return html`<button class=${classMap({ tool: true, on })} aria-label=${name}>${icon(art)}</button>`;
  }

  private groups(list: Art[][], name: string, on = "") {
    return list.map((g, i) => html`${i ? html`<span class="bar"></span>` : nothing}
      <div class="set" style="--n:${g.length}">${g.map((a, j) => this.tool(a, `${name} ${i + 1}.${j + 1}`, on === `${i}.${j}`))}</div>`);
  }

  private twig(it: Item) {
    if (!it.box) return html`<span class=${classMap({ twig: true, deep: !!it.child })}></span>`;
    return html`<button class="twig" aria-label=${it.label}><svg viewBox="0 0 7 7"><path d="M.5.5h6v6h-6z" fill="#fff" stroke="#808080"/><path d=${it.box === "plus" ? "M2 3.500h3M3.500 2v3" : "M2 3.500h3"} stroke="#000"/></svg></button>`;
  }

  private row(it: Item) {
    const art = icon(treeArt[it.art!], "leaf");
    return html`<li class=${classMap({ bold: !!it.bold })}>${this.twig(it)}
      ${it.mark
        ? html`<label><input class="tick ${it.mark}" type="checkbox" .checked=${it.mark !== "none"}>${art}<span>${it.label}</span></label>`
        : html`<label>${art}<span>${it.label}</span></label>`}</li>`;
  }

  private head(text: string) {
    return html`<button class="head"><svg viewBox="0 0 7 7"><path d="M0 0h7L3.500 7z" fill="#d5d5d5"/></svg>${text}</button>`;
  }

  private fold(minus: boolean, cls = "") {
    return html`<button class="fold ${cls}" aria-label="展开"><svg viewBox="0 0 7 7"><path d=${minus ? "M1 3.500h5" : "M1 3.500h5M3.500 1v5"} stroke="#33527d"/></svg></button>`;
  }

  render() {
    return html`
      <header class="ribbon">
        <span class="grip"></span>
        ${commands.map(c => html`<button class=${`cmd ${c.cls} ${c.off ? "off" : ""}`} ?disabled=${c.off}>
          <svg viewBox="0 0 40 17">${c.art}</svg>${c.name}</button>`)}
        <span class="divide"></span>
        <div class="small">
          <div class="line cut">${this.groups(rowOne, "建模")}</div>
          <div class="line">${this.groups(rowTwo, "编辑")}</div>
        </div>
      </header>
      <nav class="tools">
        <span class="grip"></span>
        ${this.groups(fileTools, "文件")}
        <button class="more" aria-label="更多"><svg viewBox="0 0 7 8"><path d="M1 2h5M1.500 5h4L3.500 7z" stroke="#666" fill="#666"/></svg></button>
        <span class="split"></span>
        <div class="wide">${this.groups(viewTools, "视图", "3.3")}</div>
      </nav>
      <main class="work">
        <aside class="side">
          <div class="title"><span>树</span>
            <svg viewBox="0 0 8 8"><path d="M2.500 1h3v4h-3zM1 5h6M4 5v3" fill="none" stroke="#555"/></svg>
            <svg viewBox="0 0 8 8"><path d="M1 1l6 6M7 1L1 7" stroke="#555"/></svg></div>
          ${this.head("特征")}
          <div class="pane">
            <ul>${features.map(f => this.row(f))}</ul>
            <div class="scroll">
              <button class="arrow" aria-label="向上"><svg viewBox="0 0 5 4"><path d="M0 4h5L2.500 0z"/></svg></button>
              <span class="thumb"></span><span class="rest"></span>
              <button class="arrow" aria-label="向下"><svg viewBox="0 0 5 4"><path d="M0 0h5L2.500 4z"/></svg></button>
            </div>
          </div>
          ${this.head("模型")}
          <div class="pane low"><ul><li class="root"><i></i>创建曲面</li>${model.map(m => this.row(m))}</ul></div>
        </aside>
        <div class="gutter"></div>
        <section class="view"><svg viewBox="248 59 575 471" preserveAspectRatio="xMidYMid slice">${scene}</svg></section>
        <aside class="props">
          <div class="cap">Accu</div>
          <fieldset class="box1"><legend>类型</legend>
            ${[0, 1, 2, 3, 4, 5].map(i => html`<input class="radio" type="radio" name="kind" aria-label="类型 ${i + 1}" ?checked=${i === 0}>`)}
            <span class="word">类</span><span class="word">纹</span>
          </fieldset>
          <fieldset class="box2 faint"><legend><input class="square" type="checkbox" aria-label="范围"></legend>
            <span class="word">下</span><span class="word">上</span><span class="word">颜</span>
            <input class="square late" type="checkbox" aria-label="颜色">
          </fieldset>
          <fieldset class="box3"><legend>编辑</legend><span class="word faint">最</span></fieldset>
          <div class="hs"><button class="arrow" aria-label="向左"><svg viewBox="0 0 5 4"><path d="M4 0v4L1 2z"/></svg></button><i></i></div>
          <div class="cap">属性</div>
          <button class="sort" aria-label="分类"><svg viewBox="0 0 16 12"><path d="M1 1h4v4H1zM1 7h4v4H1z" fill="#fff" stroke="#555"/><path d="M7 2h3M12 2h3M7 4h3M12 4h3M7 8h3M12 8h3M7 10h3M12 10h3" stroke="#9b8a55"/></svg></button>
          <div class="col">名</div>
          <div class="prop">${this.fold(true)}<b>一</b></div>
          <div class="prop">${this.fold(true)}<b>外</b></div>
          <div class="prop">${this.fold(true)}<b>基</b></div>
          ${this.fold(false, "sub")}
        </aside>
      </main>`;
  }
}
